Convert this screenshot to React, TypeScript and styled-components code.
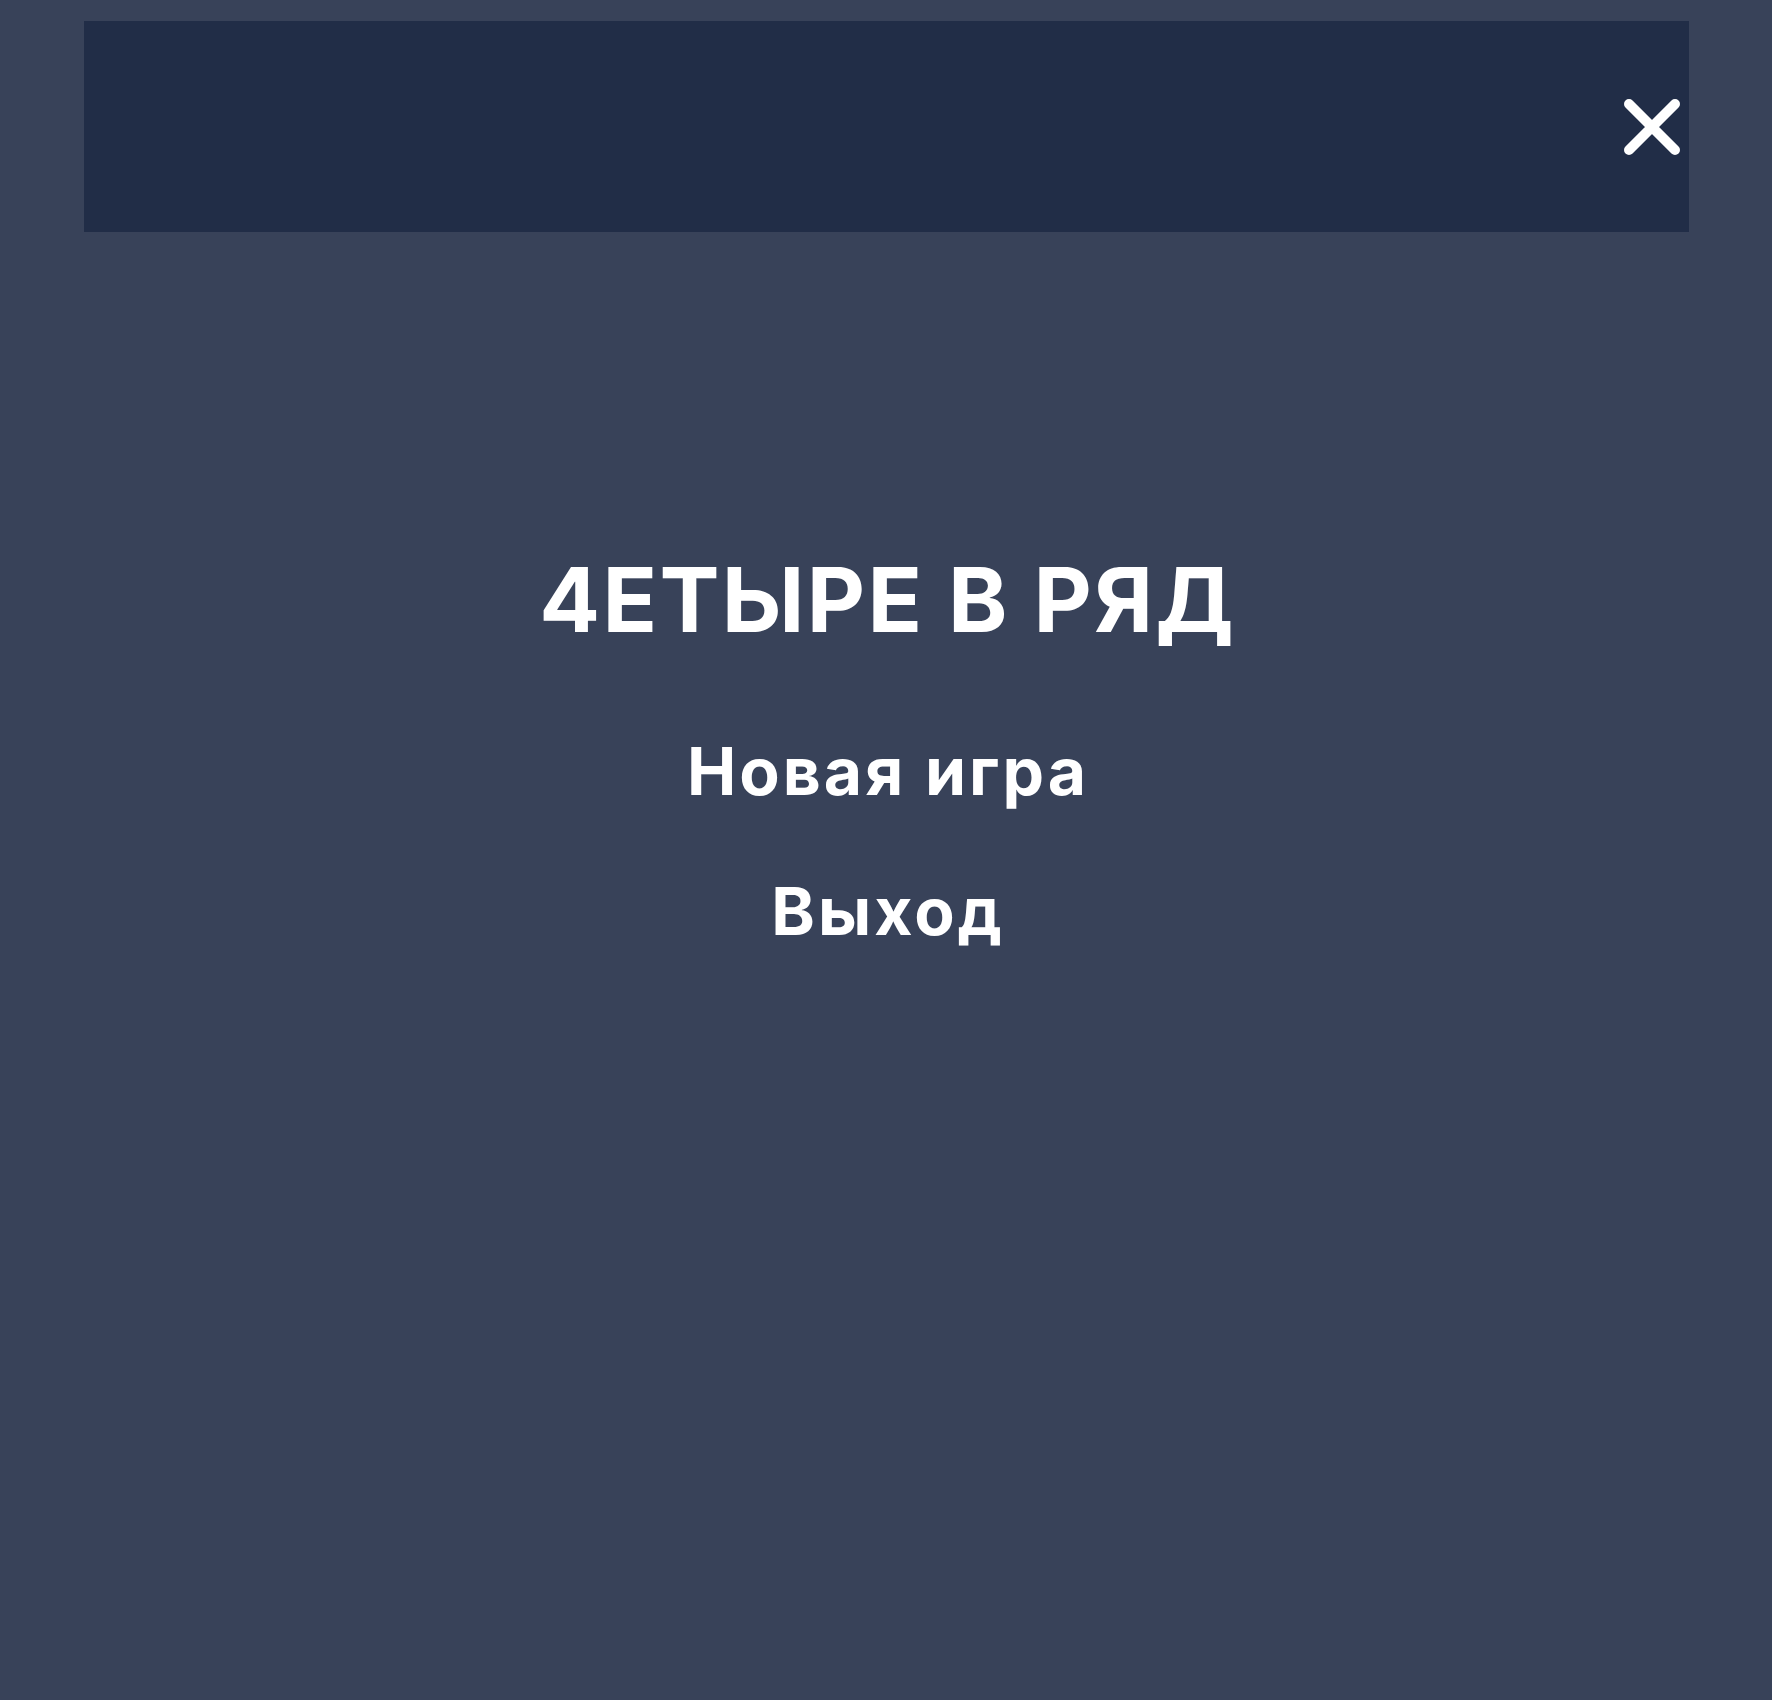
import React from "react";
import styled, { createGlobalStyle } from "styled-components";

const GlobalStyle = createGlobalStyle`
  html, body {
    margin: 0;
    padding: 0;
    background: #384259;
  }
  * { box-sizing: border-box; }
`;

const Page = styled.div`
  min-height: 1700px;
  background: #384259;
  padding: 21px 83px 0 84px;
  font-family: Inter, "Open Sans", "Noto Sans", sans-serif;
  color: #ffffff;
`;

const TopBar = styled.header`
  height: 211px;
  background: #212d47;
  display: flex;
  align-items: center;
  justify-content: flex-end;
  padding-right: 9px;
`;

const CloseButton = styled.button`
  width: 56px;
  height: 56px;
  padding: 0;
  border: none;
  background: transparent;
  display: flex;
  align-items: center;
  justify-content: center;
  cursor: pointer;
`;

const Menu = styled.main`
  display: flex;
  flex-direction: column;
  align-items: center;
  padding-top: 318px;
`;

const Title = styled.h1`
  margin: 0;
  padding-left: 2.3px;
  font-size: 90px;
  line-height: 100px;
  font-weight: 700;
  letter-spacing: 2.3px;
`;

const MenuItem = styled.button<{ $gap: number }>`
  margin-top: ${(p) => p.$gap}px;
  padding: 0 0 0 3px;
  border: none;
  background: transparent;
  color: #ffffff;
  font-family: inherit;
  font-size: 66px;
  line-height: 90px;
  font-weight: 700;
  letter-spacing: 3px;
  cursor: pointer;
`;

export default function App() {
  return (
    <>
      <GlobalStyle />
      <Page>
        <TopBar>
          <CloseButton aria-label="Закрыть">
            <svg width="56" height="56" viewBox="0 0 56 56">
              <path
                d="M5 5 L51 51 M51 5 L5 51"
                stroke="#ffffff"
                strokeWidth="10"
                strokeLinecap="round"
                fill="none"
              />
            </svg>
          </CloseButton>
        </TopBar>
        <Menu>
          <Title>4ЕТЫРЕ В РЯД</Title>
          <MenuItem $gap={76}>Новая игра</MenuItem>
          <MenuItem $gap={50}>Выход</MenuItem>
        </Menu>
      </Page>
    </>
  );
}
